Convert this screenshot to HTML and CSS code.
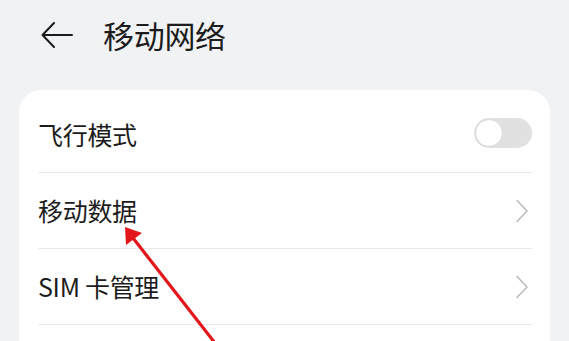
FILE: index.html
```html
<!DOCTYPE html>
<html lang="zh-CN">
<head>
<meta charset="utf-8">
<title>移动网络</title>
<link rel="stylesheet" href="styles.css">
</head>
<body>
<div class="page">
  <header class="header">
    <svg class="back" width="32" height="26" viewBox="0 0 32 26">
      <path d="M13 1 L1.5 13 L13 25 M1.5 13 H31" fill="none" stroke="#1c1c1c" stroke-width="2" stroke-linecap="round" stroke-linejoin="round"/>
    </svg>
    <h1 class="title">移动网络</h1>
  </header>
  <section class="card">
    <div class="row">
      <span class="label">飞行模式</span>
      <span class="switch"><span class="thumb"></span></span>
    </div>
    <div class="row">
      <span class="label">移动数据</span>
      <svg class="chev" width="14" height="24" viewBox="0 0 14 24"><path d="M2 1.5 L12 12 L2 22.5" fill="none" stroke="#bcbcbc" stroke-width="1.6" stroke-linecap="round" stroke-linejoin="round"/></svg>
    </div>
    <div class="row">
      <span class="label">SIM 卡管理</span>
      <svg class="chev" width="14" height="24" viewBox="0 0 14 24"><path d="M2 1.5 L12 12 L2 22.5" fill="none" stroke="#bcbcbc" stroke-width="1.6" stroke-linecap="round" stroke-linejoin="round"/></svg>
    </div>
    <div class="rest"></div>
  </section>
  <svg class="annot" width="569" height="341" viewBox="0 0 569 341">
    <line x1="133" y1="238" x2="215" y2="343" stroke="#e2161b" stroke-width="3.2"/>
    <polygon points="125,227 126,245 142,233" fill="#e2161b"/>
  </svg>
</div>
</body>
</html>
```

FILE: styles.css
```css
html, body {
  margin: 0;
  padding: 0;
}
body {
  background: #f1f2f4;
  font-family: "Noto Sans CJK SC", "Noto Sans", sans-serif;
  color: #1c1c1c;
  width: 569px;
  height: 341px;
  overflow: hidden;
}
.page {
  position: relative;
  width: 569px;
  height: 341px;
  overflow: hidden;
}
.header {
  height: 68px;
  display: flex;
  align-items: center;
  padding-left: 41px;
}
.back {
  display: block;
  margin-top: 1px;
}
.title {
  margin: 0 0 0 30px;
  font-size: 31px;
  font-weight: 400;
  line-height: 1;
  letter-spacing: -0.3px;
}
.card {
  margin: 22px 0 0 19px;
  width: 531px;
  background: #ffffff;
  border-radius: 22px 22px 0 0;
  padding: 7px 18px 0 19px;
  box-sizing: border-box;
}
.row {
  height: 76px;
  display: flex;
  align-items: center;
  justify-content: space-between;
  border-bottom: 1px solid #e9e9ea;
  box-sizing: border-box;
}
.rest {
  height: 16px;
}
.label {
  font-size: 25px;
  line-height: 1;
  font-weight: 400;
  letter-spacing: -0.3px;
}
.switch {
  position: relative;
  width: 58px;
  height: 30px;
  border-radius: 15px;
  background: #e1e1e2;
  margin-top: -3px;
}
.thumb {
  position: absolute;
  left: 1px;
  top: 1px;
  width: 26px;
  height: 26px;
  border-radius: 50%;
  background: #ffffff;
  border: 1px solid #d8d8d8;
}
.chev {
  display: block;
  margin-right: 3px;
}
.annot {
  position: absolute;
  left: 0;
  top: 0;
  pointer-events: none;
}
```
